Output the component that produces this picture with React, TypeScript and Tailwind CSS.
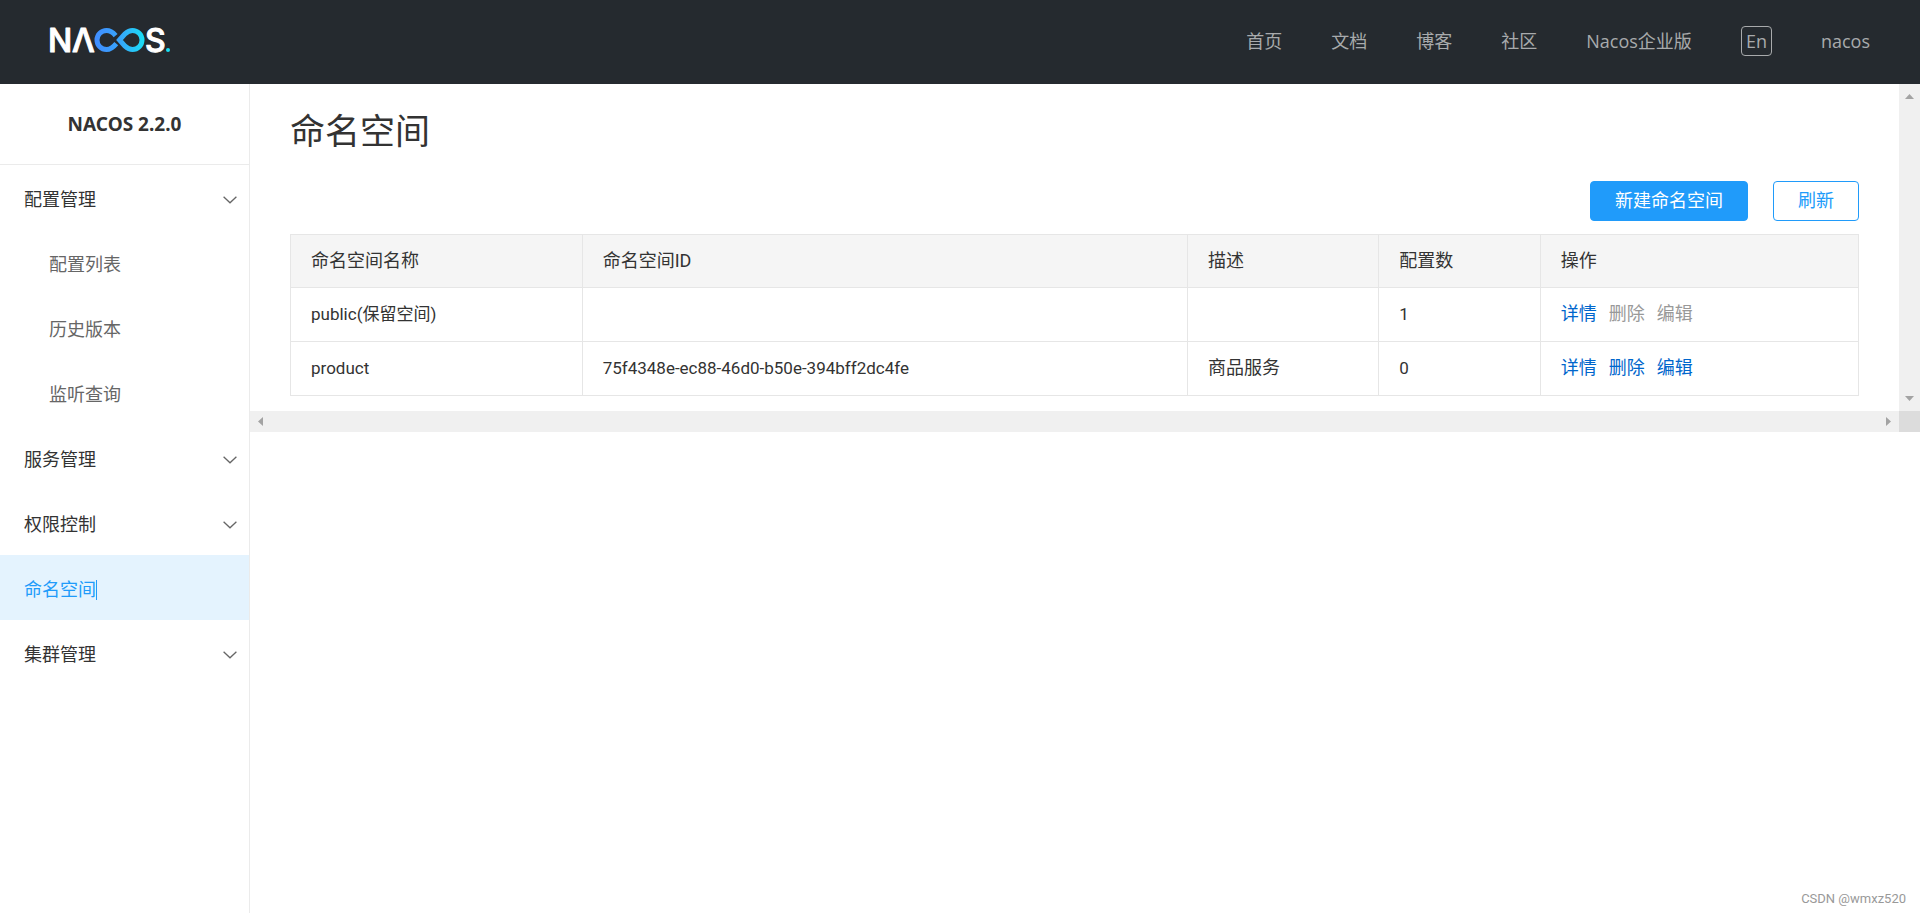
import React from "react";

const navLinks = ["首页", "文档", "博客", "社区", "Nacos企业版"];

type MenuEntry = { label: string; children?: string[]; expandable?: boolean; active?: boolean };

const menu: MenuEntry[] = [
  { label: "配置管理", expandable: true, children: ["配置列表", "历史版本", "监听查询"] },
  { label: "服务管理", expandable: true },
  { label: "权限控制", expandable: true },
  { label: "命名空间", active: true },
  { label: "集群管理", expandable: true },
];

const rows = [
  { name: "public(保留空间)", id: "", desc: "", count: 1, locked: true },
  { name: "product", id: "75f4348e-ec88-46d0-b50e-394bff2dc4fe", desc: "商品服务", count: 0, locked: false },
];

function Logo() {
  return (
    <svg width="130" height="52" viewBox="-4 -10 130 52" role="img" aria-label="NACOS.">
      <defs>
        <linearGradient id="loop" gradientUnits="userSpaceOnUse" x1="45" y1="0" x2="95" y2="0">
          <stop offset="0" stopColor="#418dff" />
          <stop offset="0.5" stopColor="#37a5fb" />
          <stop offset="1" stopColor="#18e0f5" />
        </linearGradient>
      </defs>
      <g className="fill-white font-['Inter'] text-[32px] font-medium" stroke="#fff" strokeWidth="1" strokeLinejoin="round">
        <text x="-2" y="25.6">N</text>
        <text x="22" y="25.6">Λ</text>
        <text x="95" y="25.6">S</text>
      </g>
      <g fill="none" stroke="url(#loop)" strokeWidth="5">
        <path d="M65.6 9.6 C63 6.5 60 4.5 56.5 4.5 A9.5 9.5 0 0 0 56.5 23.5 C60.5 23.5 63.5 21 66.3 17.6" />
        <path d="M69.5 14 L75 7.8 C77.6 5.4 80 4.5 82.5 4.5 A9.5 9.5 0 0 1 82.5 23.5 C80 23.5 77.6 22.6 75 20.2 Z" />
      </g>
      <circle cx="118" cy="24" r="2" fill="#18e0f5" />
    </svg>
  );
}

function Chevron() {
  return (
    <svg width="14" height="8" viewBox="0 0 14 8" fill="none" stroke="#666" strokeWidth="1.3" aria-hidden="true">
      <path d="M0.6 0.8 L7 6.8 L13.4 0.8" />
    </svg>
  );
}

function Arrow({ d, w, h }: { d: string; w: number; h: number }) {
  return (
    <svg width={w} height={h} viewBox={`0 0 ${w} ${h}`} fill="#a3a3a3" aria-hidden="true">
      <path d={d} />
    </svg>
  );
}

export default function App() {
  return (
    <div className="flex min-h-screen flex-col bg-white font-['Roboto','Noto_Sans_CJK_SC',sans-serif] text-lg leading-6 text-[#333]">
      <header className="flex h-21 items-center justify-between bg-[#252a2f] px-12.5 font-['Open_Sans','Noto_Sans_CJK_SC',sans-serif] text-[#a8aaac]">
        <a href="#home" className="-ml-1 block">
          <Logo />
        </a>
        <nav className="flex items-center gap-[49px] pb-0.5">
          {navLinks.map((label) => (
            <a key={label} href="#nav">
              {label}
            </a>
          ))}
          <button type="button" className="flex h-7.5 items-center rounded-sm border border-[#a8aaac] px-1">
            En
          </button>
          <a href="#user">nacos</a>
        </nav>
      </header>

      <div className="flex grow">
        <aside className="w-62.5 shrink-0 border-r border-[#ebebeb]">
          <h2 className="flex h-[81px] items-center justify-center border-b border-[#ebebeb] font-['Noto_Sans',sans-serif] text-[19px] font-bold">
            NACOS 2.2.0
          </h2>
          <ul>
            {menu.map((entry) => (
              <li key={entry.label}>
                <a
                  href="#menu"
                  className={
                    entry.active
                      ? "flex h-16.25 items-center bg-[#e4f3fe] pt-1 pl-6 text-[#209bfa]"
                      : "flex h-16.25 items-center justify-between pt-1 pr-3 pl-6"
                  }
                >
                  <span className={entry.active ? "border-r border-[#209bfa] leading-5" : ""}>{entry.label}</span>
                  {entry.expandable && <Chevron />}
                </a>
                {entry.children && (
                  <ul className="text-[#666]">
                    {entry.children.map((child) => (
                      <li key={child}>
                        <a href="#menu" className="flex h-16.25 items-center pt-1 pl-[49px]">
                          {child}
                        </a>
                      </li>
                    ))}
                  </ul>
                )}
              </li>
            ))}
          </ul>
        </aside>

        <div className="flex min-w-0 grow flex-col">
          <div className="flex">
            <main className="min-w-0 grow px-10 pb-[15px]">
              <h1 className="pt-[23px] text-[35px] leading-13 font-normal">命名空间</h1>
              <div className="mt-[22px] flex justify-end gap-[25px]">
                <button type="button" className="h-10 rounded-sm border border-[#209bfa] bg-[#209bfa] px-6 text-white">
                  新建命名空间
                </button>
                <button type="button" className="h-10 rounded-sm border border-[#209bfa] px-6 text-[#209bfa]">
                  刷新
                </button>
              </div>
              <table className="mt-[13px] w-full table-fixed border-collapse text-left">
                <colgroup>
                  <col className="w-[18.6%]" />
                  <col className="w-[38.6%]" />
                  <col className="w-[12.2%]" />
                  <col className="w-[10.3%]" />
                  <col className="w-[20.3%]" />
                </colgroup>
                <thead className="bg-[#f5f5f5]">
                  <tr className="h-[53px]">
                    {["命名空间名称", "命名空间ID", "描述", "配置数", "操作"].map((h) => (
                      <th key={h} scope="col" className="border border-[#e6e6e6] px-5 font-normal">
                        {h}
                      </th>
                    ))}
                  </tr>
                </thead>
                <tbody>
                  {rows.map((row) => (
                    <tr key={row.name} className="h-13.5">
                      <td className="border border-[#e6e6e6] px-5 pb-0.5 text-[17px]">{row.name}</td>
                      <td className="border border-[#e6e6e6] px-5 pb-0.5 text-[17px]">{row.id}</td>
                      <td className="border border-[#e6e6e6] px-5 pb-0.5">{row.desc}</td>
                      <td className="border border-[#e6e6e6] px-5 pb-0.5 text-[17px]">{row.count}</td>
                      <td className="border border-[#e6e6e6] px-5 pb-0.5">
                        <div className="flex gap-3 text-[#0066cc]">
                          <a href="#detail">详情</a>
                          <a href="#delete" className={row.locked ? "text-[#999]" : ""}>
                            删除
                          </a>
                          <a href="#edit" className={row.locked ? "text-[#999]" : ""}>
                            编辑
                          </a>
                        </div>
                      </td>
                    </tr>
                  ))}
                </tbody>
              </table>
            </main>
            <div className="flex w-5.25 shrink-0 flex-col items-center justify-between bg-[#f0f0f0] py-2.5">
              <Arrow w={9} h={5} d="M0 5 L4.5 0 L9 5 Z" />
              <Arrow w={9} h={5} d="M0 0 L4.5 5 L9 0 Z" />
            </div>
          </div>
          <div className="flex h-5.25">
            <div className="flex grow items-center justify-between bg-[#f0f0f0] px-2">
              <Arrow w={5} h={9} d="M5 0 L0 4.5 L5 9 Z" />
              <Arrow w={5} h={9} d="M0 0 L5 4.5 L0 9 Z" />
            </div>
            <div className="w-5.25 bg-[#dcdcdc]" />
          </div>
          <footer className="mt-auto flex justify-end pr-3.5 pb-1.5 text-[13px] leading-4 text-[#999]">
            CSDN @wmxz520
          </footer>
        </div>
      </div>
    </div>
  );
}
